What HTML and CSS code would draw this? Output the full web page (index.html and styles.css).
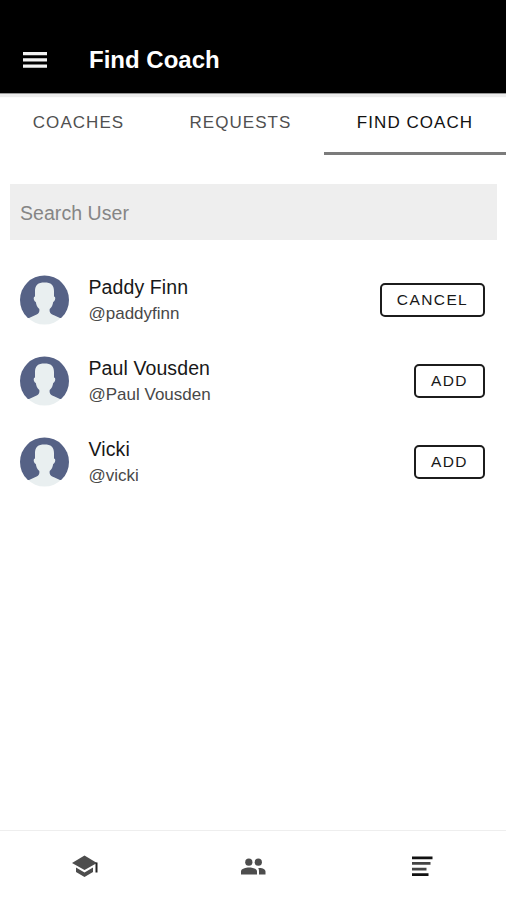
FILE: index.html
```
<!DOCTYPE html>
<html lang="en">
<head>
<meta charset="utf-8">
<meta name="viewport" content="width=device-width">
<title>Find Coach</title>
<link rel="stylesheet" href="styles.css">
</head>
<body>
<svg width="0" height="0" class="defs">
  <symbol id="avatar" viewBox="0 0 50 50">
    <clipPath id="round"><circle cx="24.500" cy="25" r="24.5"/></clipPath>
    <g clip-path="url(#round)">
      <path fill="#566286" d="M0 0h50v43H0z"/>
      <path fill="#e9eff0" d="M24.500 7.500c-6.500 0-9.500 2.500-9.500 8.500v5.500c-2 0-1.500 4.500.8 5.500.5 3 1.300 5 3.500 7 .5 3.500-1 5-4.300 6.300L2.500 46v4h44v-4l-12.500-5.700c-3.300-1.300-4.800-2.800-4.300-6.300 2.200-2 3-4 3.500-7 2.300-1 2.800-5.500.8-5.500V16c0-6-3-8.500-9.500-8.500z"/>
    </g>
  </symbol>
</svg>
<header class="appbar">
  <svg class="menu" viewBox="0 0 24 18"><path fill="#f4f4f4" d="M0 1h24v3.200H0zM0 7.300h24v3.200H0zM0 13.500h24v3.200H0z"/></svg>
  <h1 class="title">Find Coach</h1>
</header>
<nav class="tabs">
  <a class="tab">COACHES</a>
  <a class="tab">REQUESTS</a>
  <a class="tab active">FIND COACH</a>
</nav>
<main class="content">
  <div class="search">Search User</div>
  <ul class="users">
    <li class="user">
      <svg class="avatar"><use href="#avatar"/></svg>
      <div class="info"><div class="name">Paddy Finn</div><div class="handle">@paddyfinn</div></div>
      <button class="action cancel">CANCEL</button>
    </li>
    <li class="user">
      <svg class="avatar"><use href="#avatar"/></svg>
      <div class="info"><div class="name">Paul Vousden</div><div class="handle">@Paul Vousden</div></div>
      <button class="action">ADD</button>
    </li>
    <li class="user">
      <svg class="avatar"><use href="#avatar"/></svg>
      <div class="info"><div class="name">Vicki</div><div class="handle">@vicki</div></div>
      <button class="action">ADD</button>
    </li>
  </ul>
</main>
<footer class="bottom">
  <a class="item"><svg class="icon" viewBox="0 0 28 24"><path fill="#4d4d4d" d="M2 9 14.500 1.500 27 9l-12.500 7zM6 13.500l8.500 5 8.500-5v4.500L14.500 23 6 18z"/><path fill="#222" d="M25.500 8.500h2v10h-2z"/></svg></a>
  <a class="item"><svg class="icon" viewBox="0 0 28 24"><g fill="#4d4d4d"><circle cx="9.800" cy="8.200" r="3.600"/><circle cx="19.300" cy="8.200" r="3.600"/><path d="M2 20.500v-3c0-3 5-4 8-4s8 1 8 4v3zM19.200 14c3.500-.5 7.300.8 7.300 3.500v3H20v-3c0-1.500-.2-2.500-.8-3.500z"/></g></svg></a>
  <a class="item"><svg class="icon" viewBox="0 0 28 24"><path fill="#111" d="M4 2.500h20.500v2.700H4zM4 19.300h16.500V22H4z"/><path fill="#444" d="M4 8.100h18.500v2.700H4zM4 13.700h14.500v2.700H4z"/></svg></a>
</footer>
</body>
</html>
```
FILE: styles.css
```
* { box-sizing: border-box; }
body {
  margin: 0;
  height: 900px;
  display: flex;
  flex-direction: column;
  overflow: hidden;
  background: #fff;
  color: #181818;
  font-family: "Liberation Sans", Arial, sans-serif;
}
.defs { position: absolute; }
.appbar {
  height: 93px;
  padding: 26px 0 0 23px;
  display: flex;
  align-items: center;
  gap: 42px;
  background: #000;
  color: #fff;
  box-shadow: 0 1px 0 #999, 0 4px 1px #ececec;
}
.menu { width: 24px; height: 18px; }
.title { margin: 0; font-size: 24px; line-height: 28px; }
.tabs {
  display: grid;
  grid-template-columns: 157px 167px 182px;
  height: 62px;
}
.tab {
  display: flex;
  justify-content: center;
  padding-top: 20px;
  font-size: 17px;
  line-height: 20px;
  letter-spacing: 1.050px;
  color: #505050;
}
.tab.active { color: #111; border-bottom: 3px solid #7b7b7b; }
.content { flex: 1; padding: 29px 9px 0 10px; }
.search {
  height: 56px;
  padding-left: 10px;
  line-height: 58px;
  font-size: 19.500px;
  letter-spacing: .05px;
  background: #eee;
  color: #858585;
}
.users { list-style: none; margin: 19.800px 0 0; padding: 0 12px 0 10px; }
.user { display: flex; align-items: center; height: 80.700px; }
.avatar { width: 50px; height: 50px; margin-right: 18.500px; }
.info { flex: 1; padding-top: 1px; }
.name { font-size: 19.500px; line-height: 26px; letter-spacing: .1px; }
.handle { font-size: 17px; line-height: 27px; color: #484848; }
.action {
  width: 71px;
  height: 34px;
  padding: 0;
  border: 2px solid #1c1c1c;
  border-radius: 5px;
  background: #fff;
  color: #181818;
  font: 15.500px/30px "Liberation Sans", Arial, sans-serif;
  letter-spacing: 1.400px;
}
.action.cancel { width: 105px; }
.bottom {
  display: grid;
  grid-template-columns: repeat(3, 1fr);
  height: 70px;
  border-top: 1px solid #eee;
}
.item { display: flex; justify-content: center; padding-top: 23px; }
.icon { width: 28px; height: 24px; }
```
